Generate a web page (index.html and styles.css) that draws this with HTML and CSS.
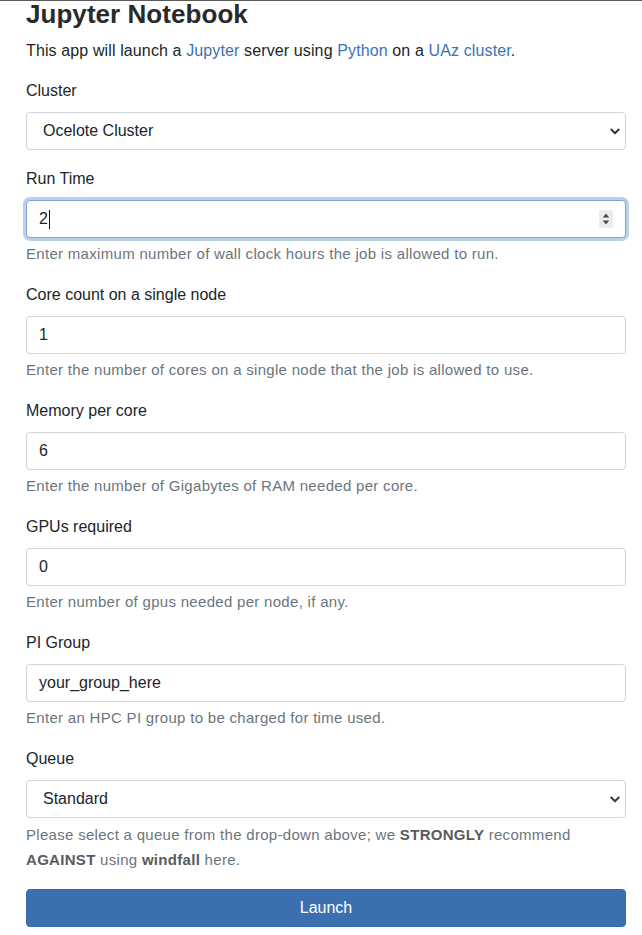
FILE: index.html
```html
<!DOCTYPE html>
<html lang="en">
<head>
<meta charset="utf-8">
<title>Jupyter Notebook</title>
<link rel="stylesheet" href="styles.css">
</head>
<body>
<div class="topline"></div>
<main class="page">
  <h3 class="title">Jupyter Notebook</h3>
  <p class="intro">This app will launch a <a href="#">Jupyter</a> server using <a href="#">Python</a> on a <a href="#">UAz cluster</a>.</p>
  <form class="form">
    <div class="group">
      <label class="label">Cluster</label>
      <div class="control select">
        <span class="value">Ocelote Cluster</span>
        <svg class="chev" width="10" height="7" viewBox="0 0 10 7"><path d="M1.3 1.5 L5 5.2 L8.7 1.5" fill="none" stroke="#3a3a3a" stroke-width="2" stroke-linecap="round" stroke-linejoin="round"/></svg>
      </div>
    </div>
    <div class="group">
      <label class="label">Run Time</label>
      <div class="control input focus">
        <span class="value">2</span><span class="caret"></span>
        <span class="spin">
          <svg width="8" height="14" viewBox="0 0 8 14"><path d="M4 1.5 L7.2 5.5 H0.8 Z" fill="#4a4a4a"/><path d="M4 12.5 L7.2 8.5 H0.8 Z" fill="#4a4a4a"/></svg>
        </span>
      </div>
      <small class="help">Enter maximum number of wall clock hours the job is allowed to run.</small>
    </div>
    <div class="group">
      <label class="label">Core count on a single node</label>
      <div class="control input"><span class="value">1</span></div>
      <small class="help">Enter the number of cores on a single node that the job is allowed to use.</small>
    </div>
    <div class="group">
      <label class="label">Memory per core</label>
      <div class="control input"><span class="value">6</span></div>
      <small class="help">Enter the number of Gigabytes of RAM needed per core.</small>
    </div>
    <div class="group">
      <label class="label">GPUs required</label>
      <div class="control input"><span class="value">0</span></div>
      <small class="help">Enter number of gpus needed per node, if any.</small>
    </div>
    <div class="group">
      <label class="label">PI Group</label>
      <div class="control input"><span class="value">your_group_here</span></div>
      <small class="help">Enter an HPC PI group to be charged for time used.</small>
    </div>
    <div class="group">
      <label class="label">Queue</label>
      <div class="control select">
        <span class="value">Standard</span>
        <svg class="chev" width="10" height="7" viewBox="0 0 10 7"><path d="M1.3 1.5 L5 5.2 L8.7 1.5" fill="none" stroke="#3a3a3a" stroke-width="2" stroke-linecap="round" stroke-linejoin="round"/></svg>
      </div>
      <small class="help help-multi">Please select a queue from the drop-down above; we <strong>STRONGLY</strong> recommend <strong>AGAINST</strong> using <strong>windfall</strong> here.</small>
    </div>
    <button type="button" class="btn">Launch</button>
  </form>
</main>
</body>
</html>
```

FILE: styles.css
```css
html, body {
  margin: 0;
  padding: 0;
  background: #ffffff;
}
body {
  font-family: "Liberation Sans", Arial, Helvetica, sans-serif;
  font-size: 16px;
  line-height: 24px;
  color: #212529;
}
.topline {
  height: 1px;
  background: #5a5a5a;
}
.page {
  padding: 0 16px 0 26px;
}
.title {
  margin: 0 0 12px 0;
  font-size: 26px;
  line-height: 26px;
  font-weight: 700;
  color: #2a2a2a;
  letter-spacing: 0.05px;
}
.intro {
  margin: 0 0 16px 0;
  letter-spacing: 0.12px;
}
.intro a {
  color: #3a72b6;
  text-decoration: none;
}
.form {
  display: flex;
  flex-direction: column;
}
.group {
  display: flex;
  flex-direction: column;
  margin-bottom: 17px;
}
.label {
  display: block;
  margin-bottom: 9px;
}
.control {
  box-sizing: border-box;
  height: 38px;
  border: 1px solid #ced4da;
  border-radius: 4px;
  background: #fff;
  display: flex;
  align-items: center;
}
.input {
  padding: 0 12px;
}
.select {
  padding: 0 5px 0 16px;
}
.select .value {
  flex: 1;
}
.chev {
  display: block;
}
.focus {
  border-color: #7ea4d6;
  box-shadow: 0 0 0 3px rgba(92, 145, 212, 0.42);
}
.caret {
  width: 1px;
  height: 19px;
  background: #111;
  margin-left: 1px;
}
.spin {
  margin-left: auto;
  width: 14px;
  height: 18px;
  background: #ececec;
  border-radius: 2px;
  display: flex;
  align-items: center;
  justify-content: center;
}
.spin svg {
  display: block;
}
.help {
  display: block;
  margin-top: 4px;
  font-size: 15px;
  letter-spacing: 0.3px;
  line-height: 24px;
  color: #6c757d;
}
.help-multi {
  line-height: 25px;
}
.help strong {
  color: #555b61;
  font-weight: 700;
}
.btn {
  box-sizing: border-box;
  width: 100%;
  height: 38px;
  border: 1px solid #3568a8;
  border-radius: 4px;
  background: #3b6fb0;
  color: #fff;
  font-family: "Liberation Sans", Arial, Helvetica, sans-serif;
  font-size: 16px;
  line-height: 24px;
  padding: 0;
  cursor: pointer;
}
```
